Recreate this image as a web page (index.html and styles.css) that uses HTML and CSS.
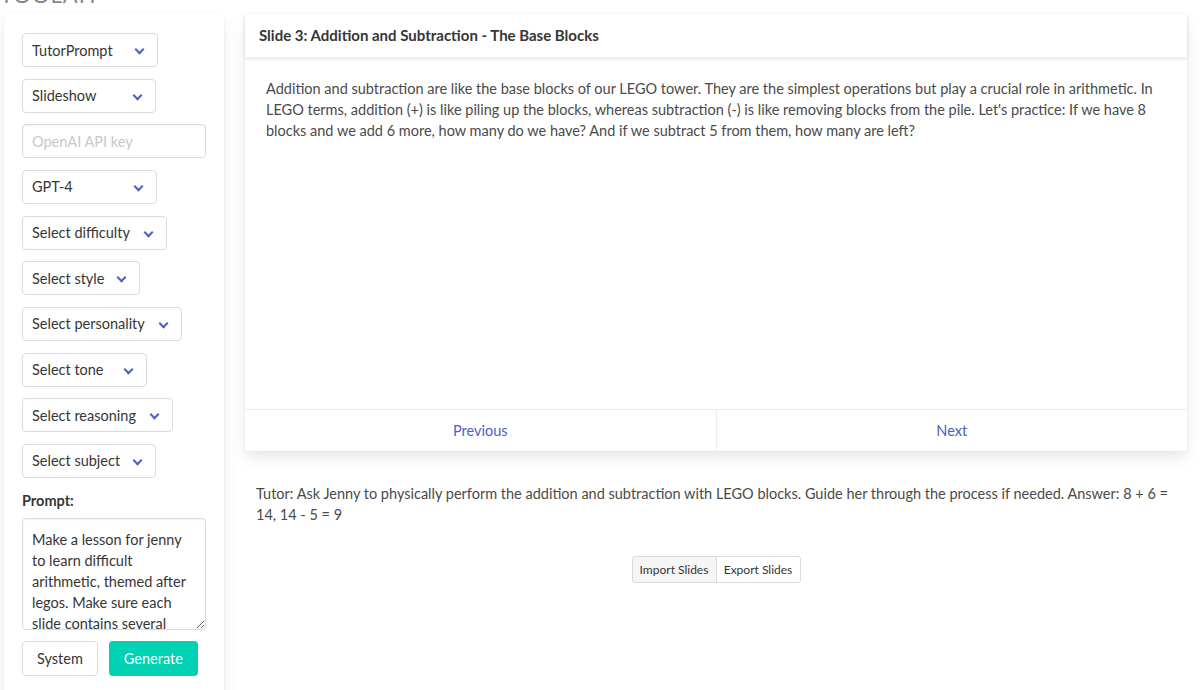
FILE: index.html
```html
<!DOCTYPE html>
<html>
<head>
<meta charset="utf-8">
<link rel="stylesheet" href="styles.css">
</head>
<body>
<div class="page">
  <h1 class="page-title">TOOLAH</h1>
  <div class="layout">
    <aside class="sidebar">
      <div class="select w-136"><span>TutorPrompt</span><i class="chev"></i></div>
      <div class="select w-134"><span>Slideshow</span><i class="chev"></i></div>
      <input class="input" type="text" placeholder="OpenAI API key">
      <div class="select w-135"><span>GPT-4</span><i class="chev"></i></div>
      <div class="select w-145"><span>Select difficulty</span><i class="chev"></i></div>
      <div class="select w-118"><span>Select style</span><i class="chev"></i></div>
      <div class="select w-160"><span>Select personality</span><i class="chev"></i></div>
      <div class="select w-125"><span>Select tone</span><i class="chev"></i></div>
      <div class="select w-151"><span>Select reasoning</span><i class="chev"></i></div>
      <div class="select w-134"><span>Select subject</span><i class="chev"></i></div>
      <div class="prompt">
        <label class="label">Prompt:</label>
        <textarea class="textarea">Make a lesson for jenny to learn difficult arithmetic, themed after legos. Make sure each slide contains several</textarea>
      </div>
      <div class="actions">
        <button class="btn">System</button>
        <button class="btn btn-primary">Generate</button>
      </div>
    </aside>
    <main class="main">
      <div class="card">
        <div class="card-header">Slide 3: Addition and Subtraction - The Base Blocks</div>
        <div class="card-content">Addition and subtraction are like the base blocks of our LEGO tower. They are the simplest operations but play a crucial role in arithmetic. In LEGO terms, addition (+) is like piling up the blocks, whereas subtraction (-) is like removing blocks from the pile. Let's practice: If we have 8 blocks and we add 6 more, how many do we have? And if we subtract 5 from them, how many are left?</div>
        <div class="card-footer">
          <a class="footer-item">Previous</a>
          <a class="footer-item">Next</a>
        </div>
      </div>
      <p class="tutor">Tutor: Ask Jenny to physically perform the addition and subtraction with LEGO blocks. Guide her through the process if needed. Answer: 8 + 6 = 14, 14 - 5 = 9</p>
      <div class="io">
        <button class="small-btn active">Import Slides</button>
        <button class="small-btn">Export Slides</button>
      </div>
    </main>
  </div>
</div>
</body>
</html>
```
FILE: styles.css
```css
* { box-sizing: border-box; }
html, body { margin: 0; padding: 0; background: #fff; overflow: hidden; }
body {
  font-family: Lato, "Noto Sans", sans-serif;
  font-size: 14.5px;
  line-height: 21px;
  color: #4a4a4a;
  width: 1200px;
  height: 690px;
}
.page-title {
  margin: -17px 0 0 0;
  height: 24px;
  font-size: 22px;
  line-height: 24px;
  font-weight: 400;
  color: #888;
  letter-spacing: 1px;
}
.layout {
  display: flex;
  align-items: flex-start;
  padding: 0 13px 0 4px;
  margin-top: 2px;
}
.sidebar {
  width: 220px;
  flex: none;
  margin-top: 4px;
  background: #fff;
  border-radius: 8px 8px 0 0;
  box-shadow: 0 0.5em 1em -0.125em rgba(10,10,10,0.1), 0 0 0 1px rgba(10,10,10,0.02);
  padding: 20px 18px 30px 18px;
  display: flex;
  flex-direction: column;
  align-items: flex-start;
  gap: 11.67px;
  min-height: 700px;
}
.select {
  position: relative;
  height: 34px;
  border: 1px solid #dbdbdb;
  border-radius: 4px;
  padding: 0 0 0 9px;
  display: flex;
  align-items: center;
  color: #363636;
  background: #fff;
  white-space: nowrap;
}
.chev {
  position: absolute;
  right: 14px;
  top: 12px;
  width: 7px;
  height: 7px;
  border-left: 2px solid #485fc7;
  border-bottom: 2px solid #485fc7;
  transform: rotate(-45deg);
}
.w-136 { width: 136px; }
.w-134 { width: 134px; }
.w-135 { width: 135px; }
.w-145 { width: 145px; }
.w-118 { width: 118px; }
.w-160 { width: 160px; }
.w-125 { width: 125px; }
.w-151 { width: 151px; }
.input {
  width: 184px;
  height: 34px;
  border: 1px solid #dbdbdb;
  border-radius: 4px;
  padding: 0 9px;
  font: inherit;
  color: #363636;
  box-shadow: inset 0 0.0625em 0.125em rgba(10,10,10,0.05);
}
.input::placeholder { color: #c8c8c8; }
.prompt { display: flex; flex-direction: column; }
.label {
  font-weight: 700;
  color: #363636;
  line-height: 21px;
  margin-top: 0;
  margin-bottom: 7px;
}
.textarea {
  width: 184px;
  height: 112px;
  border: 1px solid #dbdbdb;
  border-radius: 4px;
  padding: 10px 14px 10px 9px;
  font: inherit;
  line-height: 21px;
  color: #363636;
  resize: vertical;
  overflow: hidden;
  box-shadow: inset 0 0.0625em 0.125em rgba(10,10,10,0.05);
}
.actions { display: flex; gap: 11px; }
.btn {
  height: 35px;
  border: 1px solid #dbdbdb;
  border-radius: 4px;
  background: #fff;
  font: inherit;
  color: #363636;
  padding: 0 14px;
}
.btn-primary {
  background: #00d1b2;
  border-color: transparent;
  color: #fff;
  padding: 0 14px;
}
.main {
  flex: 1;
  margin-left: 21px;
  margin-top: 5px;
  min-width: 0;
}
.card {
  background: #fff;
  border-radius: 4px;
  box-shadow: 0 0.5em 1em -0.125em rgba(10,10,10,0.1), 0 0 0 1px rgba(10,10,10,0.02);
  display: flex;
  flex-direction: column;
}
.card-header {
  height: 43px;
  display: flex;
  align-items: center;
  padding: 0 14px;
  font-weight: 700;
  font-size: 15px;
  color: #363636;
  box-shadow: 0 0.125em 0.25em rgba(10,10,10,0.1);
}
.card-content {
  height: 352px;
  padding: 21px 21px;
}
.card-footer {
  display: flex;
  border-top: 1px solid #ededed;
  height: 42px;
}
.footer-item {
  flex: 1;
  display: flex;
  align-items: center;
  justify-content: center;
  color: #485fc7;
}
.footer-item + .footer-item { border-left: 1px solid #ededed; }
.tutor {
  margin: 32px 11px 0 11px;
}
.io {
  display: flex;
  justify-content: center;
  margin-top: 31px;
}
.small-btn {
  height: 27px;
  font: inherit;
  font-size: 12px;
  color: #363636;
  background: #fff;
  border: 1px solid #dbdbdb;
  padding: 0;
  width: 85px;
  white-space: nowrap;
}
.small-btn:first-child { border-radius: 3px 0 0 3px; }
.small-btn:last-child { border-radius: 0 3px 3px 0; margin-left: -1px; }
.small-btn.active { background: #f5f5f5; }
```
